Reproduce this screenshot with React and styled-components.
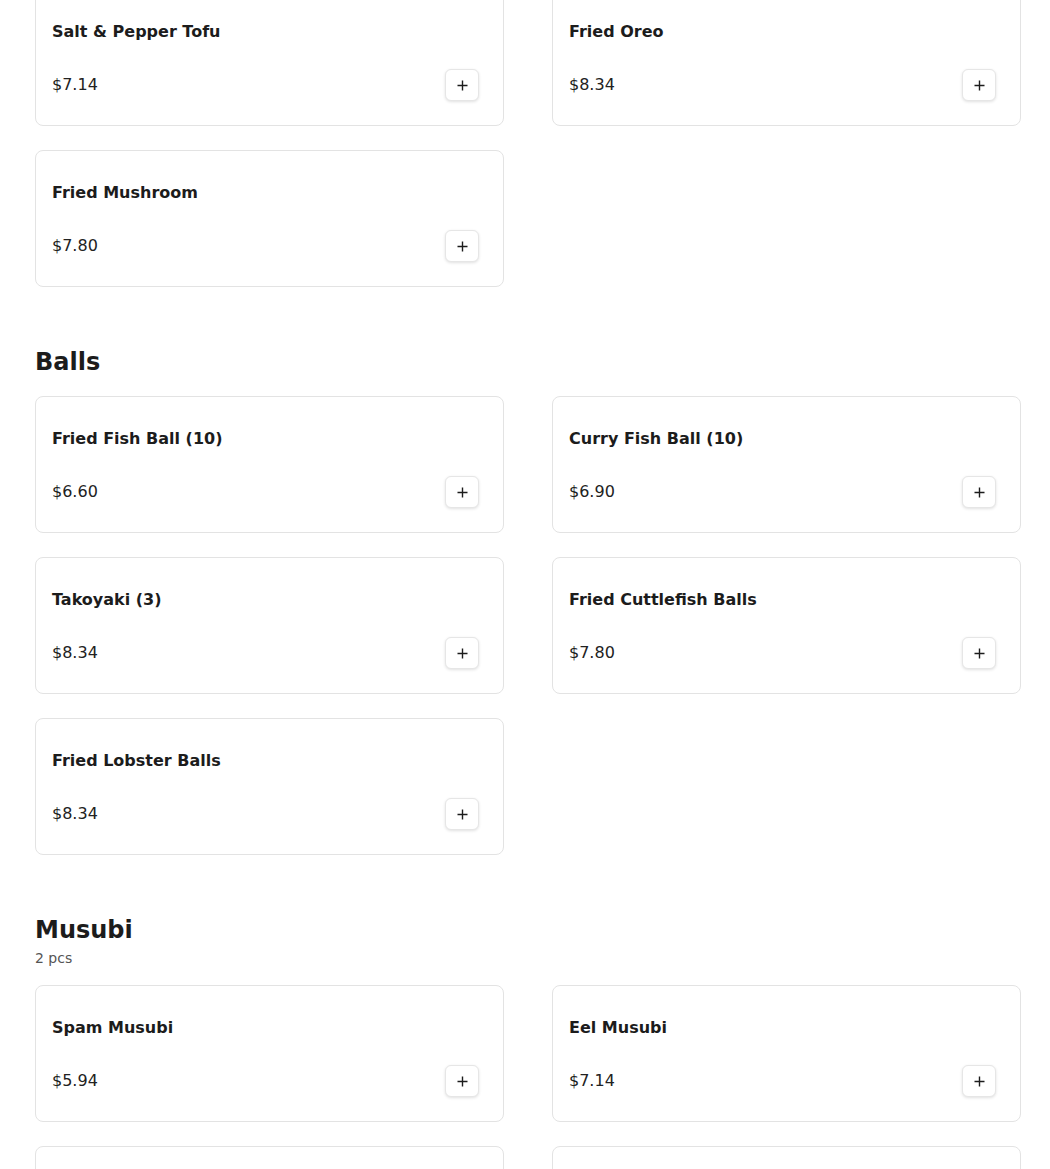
import React from "react";
import styled, { createGlobalStyle } from "styled-components";

const Global = createGlobalStyle`
  html, body { margin: 0; padding: 0; background: #ffffff; }
  body { font-family: "DejaVu Sans", "Noto Sans", sans-serif; color: #1c1c1c; }
`;

const Page = styled.div`
  padding: 0 29px 0 35px;
  margin-top: -11px;
`;

const Section = styled.section`
  & + & { margin-top: 61px; }
`;

const Header = styled.header`
  margin-bottom: 19px;
`;

const Heading = styled.h2`
  margin: 0;
  font-size: 24px;
  line-height: 29px;
  font-weight: 700;
  color: #1c1c1c;
`;

const Sub = styled.div`
  margin-top: 5px;
  font-size: 14px;
  line-height: 16px;
  color: #555;
`;

const Grid = styled.div`
  display: grid;
  grid-template-columns: 1fr 1fr;
  column-gap: 48px;
  row-gap: 24px;
`;

const Card = styled.div`
  box-sizing: border-box;
  height: 137px;
  border: 1px solid #e3e3e3;
  border-radius: 8px;
  background: #fff;
  padding: 30px 24px 0 16px;
  display: flex;
  flex-direction: column;
`;

const Title = styled.div`
  font-size: 16px;
  font-weight: 700;
  line-height: 24px;
  color: #1c1c1c;
`;

const Row = styled.div`
  margin-top: 25px;
  display: flex;
  align-items: center;
  justify-content: space-between;
`;

const Price = styled.div`
  font-size: 16px;
  line-height: 24px;
  color: #222;
`;

const AddButton = styled.button`
  width: 34px;
  height: 32px;
  padding: 0;
  border: 1px solid #e6e6e6;
  border-radius: 6px;
  background: #fff;
  box-shadow: 0 1px 3px rgba(0, 0, 0, 0.12);
  display: flex;
  align-items: center;
  justify-content: center;
  cursor: pointer;
`;

const Plus = () => (
  <svg width="11" height="11" viewBox="0 0 11 11">
    <path d="M5.5 0.5v10M0.5 5.5h10" stroke="#1c1c1c" strokeWidth="1.4" />
  </svg>
);

const sections = [
  {
    items: [
      ["Salt & Pepper Tofu", "$7.14"],
      ["Fried Oreo", "$8.34"],
      ["Fried Mushroom", "$7.80"],
    ],
  },
  {
    title: "Balls",
    items: [
      ["Fried Fish Ball (10)", "$6.60"],
      ["Curry Fish Ball (10)", "$6.90"],
      ["Takoyaki (3)", "$8.34"],
      ["Fried Cuttlefish Balls", "$7.80"],
      ["Fried Lobster Balls", "$8.34"],
    ],
  },
  {
    title: "Musubi",
    sub: "2 pcs",
    items: [
      ["Spam Musubi", "$5.94"],
      ["Eel Musubi", "$7.14"],
      ["Chicken Musubi", "$5.94"],
      ["Egg Musubi", "$5.94"],
    ],
  },
];

export default function App() {
  return (
    <>
      <Global />
      <Page>
        {sections.map((s, i) => (
          <Section key={i}>
            {s.title && (
              <Header>
                <Heading>{s.title}</Heading>
                {s.sub && <Sub>{s.sub}</Sub>}
              </Header>
            )}
            <Grid>
              {s.items.map(([name, price]) => (
                <Card key={name}>
                  <Title>{name}</Title>
                  <Row>
                    <Price>{price}</Price>
                    <AddButton aria-label="Add">
                      <Plus />
                    </AddButton>
                  </Row>
                </Card>
              ))}
            </Grid>
          </Section>
        ))}
      </Page>
    </>
  );
}
